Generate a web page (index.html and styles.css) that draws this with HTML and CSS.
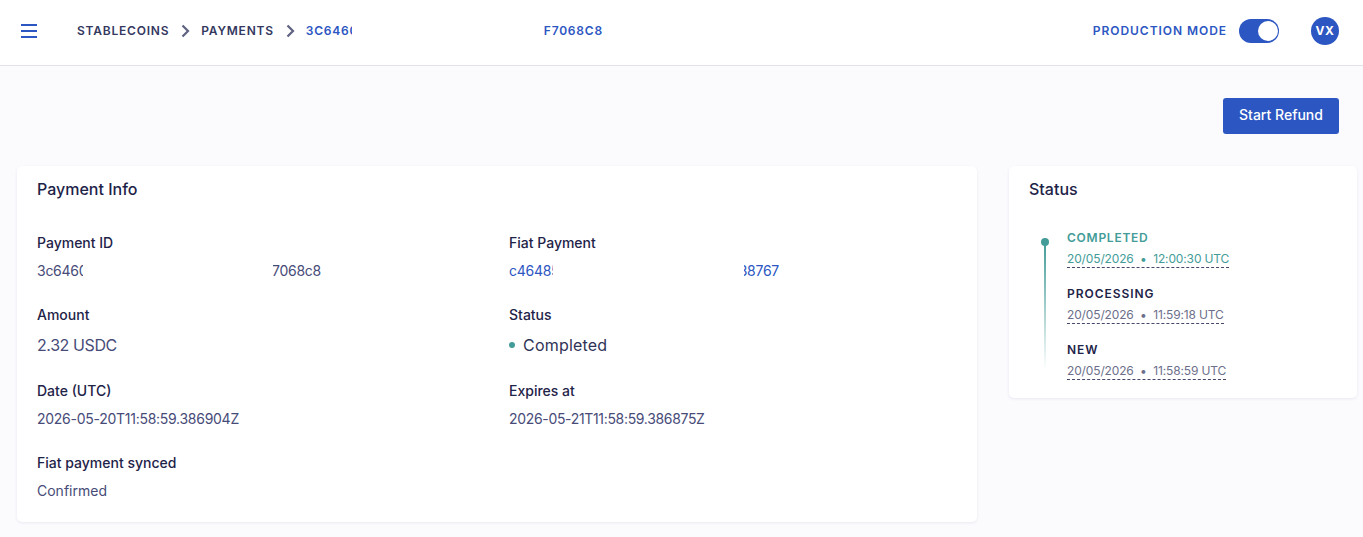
FILE: index.html
```html
<!DOCTYPE html>
<html lang="en">
<head>
<meta charset="utf-8">
<title>Payment</title>
<link rel="stylesheet" href="styles.css">
</head>
<body>
<header class="topbar">
  <svg class="menu" width="16" height="14" viewBox="0 0 16 14"><path d="M0 1h16M0 7h16M0 13h16" stroke="#2c56c2" stroke-width="2" fill="none"/></svg>
  <nav class="crumbs">
    <span class="crumb">STABLECOINS</span>
    <svg class="chev" width="9" height="14" viewBox="0 0 9 14"><path d="M1.5 1.5l5.5 5.5-5.5 5.5" stroke="#5f6280" stroke-width="2.2" fill="none"/></svg>
    <span class="crumb">PAYMENTS</span>
    <svg class="chev" width="9" height="14" viewBox="0 0 9 14"><path d="M1.5 1.5l5.5 5.5-5.5 5.5" stroke="#5f6280" stroke-width="2.2" fill="none"/></svg>
    <span class="crumb-id">
      <span class="clip clip-head-crumb">3C6460</span>
      <span class="crumb-tail">F7068C8</span>
    </span>
  </nav>
  <div class="mode">
    <span class="mode-label">PRODUCTION MODE</span>
    <span class="toggle"><span class="knob"></span></span>
    <span class="avatar">VX</span>
  </div>
</header>
<main class="content">
  <div class="actions"><button class="refund">Start Refund</button></div>
  <div class="cards">
    <section class="card info">
      <h2>Payment Info</h2>
      <div class="grid">
        <div class="field h72">
          <div class="label">Payment ID</div>
          <div class="value id num">
            <span class="clip clip-a">3c6460</span>
            <span class="clip-end clip-b"><span>f7068c8</span></span>
          </div>
        </div>
        <div class="field h72">
          <div class="label">Fiat Payment</div>
          <div class="value id num link">
            <span class="clip clip-c">c46485</span>
            <span class="clip-end clip-d"><span>38767</span></span>
          </div>
        </div>
        <div class="field h76">
          <div class="label">Amount</div>
          <div class="value big amount">2.32 USDC</div>
        </div>
        <div class="field h76">
          <div class="label">Status</div>
          <div class="value big status"><span class="dot"></span>Completed</div>
        </div>
        <div class="field h72">
          <div class="label">Date (UTC)</div>
          <div class="value num">2026-05-20T11:58:59.386904Z</div>
        </div>
        <div class="field h72">
          <div class="label">Expires at</div>
          <div class="value num expires">2026-05-21T11:58:59.386875Z</div>
        </div>
        <div class="field">
          <div class="label">Fiat payment synced</div>
          <div class="value">Confirmed</div>
        </div>
      </div>
    </section>
    <section class="card state">
      <h2>Status</h2>
      <div class="timeline">
        <div class="rail"></div>
        <div class="step done">
          <div class="step-name">COMPLETED</div>
          <div class="step-time">20/05/2026 &nbsp;•&nbsp; 12:00:30 UTC</div>
        </div>
        <div class="step">
          <div class="step-name">PROCESSING</div>
          <div class="step-time">20/05/2026 &nbsp;•&nbsp; 11:59:18 UTC</div>
        </div>
        <div class="step">
          <div class="step-name">NEW</div>
          <div class="step-time">20/05/2026 &nbsp;•&nbsp; 11:58:59 UTC</div>
        </div>
      </div>
    </section>
  </div>
</main>
</body>
</html>
```
FILE: styles.css
```css
* { box-sizing: border-box; }
html, body { margin: 0; height: 100%; }
body {
  background: #fbfbfe;
  font-family: Inter, "Liberation Sans", sans-serif;
  color: #1e2348;
  overflow: hidden;
}
.topbar {
  height: 66px;
  background: #fff;
  border-bottom: 1px solid #e1e2ea;
  display: flex;
  align-items: center;
  padding: 0 24px 4px 21px;
}
.menu { flex: none; margin-right: 40px; }
.crumbs { display: flex; align-items: center; flex: 1; }
.crumb, .crumb-id {
  font-size: 12px;
  font-weight: 600;
  letter-spacing: 0.78px;
  color: #34385f;
  line-height: 16px;
}
.chev { margin: 0 11px 0 12px; flex: none; }
.crumb-id { display: flex; color: #2c56c2; }
.clip { display: block; overflow: hidden; white-space: nowrap; }
.clip-head-crumb { width: 46px; }
.crumb-tail { margin-left: 192px; }
.mode { display: flex; align-items: center; }
.mode-label {
  font-size: 12px;
  font-weight: 600;
  letter-spacing: 0.95px;
  color: #2c56c2;
}
.toggle {
  width: 40px;
  height: 24px;
  border-radius: 12px;
  background: #2c56c2;
  margin-left: 12px;
  position: relative;
}
.knob {
  position: absolute;
  top: 2px;
  right: 1px;
  width: 20px;
  height: 20px;
  border-radius: 50%;
  background: #fff;
}
.avatar {
  width: 28px;
  height: 28px;
  border-radius: 50%;
  background: #2c56c2;
  color: #fff;
  margin-left: 32px;
  font-size: 12px;
  font-weight: 700;
  letter-spacing: 0.5px;
  display: flex;
  align-items: center;
  justify-content: center;
}
.content { padding: 32px 6px 0 17px; }
.actions { display: flex; justify-content: flex-end; padding-right: 18px; }
.refund {
  width: 116px;
  height: 36px;
  padding: 0 0 3px;
  background: #2c56c2;
  color: #fff;
  border: 0;
  border-radius: 3px;
  font: 500 14px Inter, "Liberation Sans", sans-serif;
}
.cards { display: flex; align-items: flex-start; gap: 32px; margin-top: 32px; }
.card {
  background: #fff;
  border-radius: 5px;
  box-shadow: 0 1px 3px rgba(40, 50, 110, 0.09);
}
.card h2 {
  margin: 0;
  font-size: 16px;
  font-weight: 500;
  line-height: 20px;
  color: #1e2348;
}
.info { width: 960px; height: 356px; padding: 13px 20px 0; }
.state { width: 348px; height: 232px; padding: 13px 20px 0; }
.grid {
  display: grid;
  grid-template-columns: 472px 1fr;
  margin-top: 34px;
}
.h72 { height: 72px; }
.h76 { height: 76px; }
.label { font-size: 14px; font-weight: 500; line-height: 20px; color: #1e2348; }
.value { margin-top: 8px; font-size: 14px; line-height: 20px; color: #474b78; }
.value.big { font-size: 16px; line-height: 24px; margin-top: 8px; }
.num { letter-spacing: -0.27px; }
.expires { letter-spacing: -0.33px; }
.amount { letter-spacing: -0.4px; }
.id { display: flex; }
.link { color: #2c56c2; }
.clip-a { width: 46px; }
.clip-b { margin-left: 190px; width: 48px; }
.clip-c { width: 44px; }
.clip-d { margin-left: 191px; width: 35px; }
.clip-end { display: flex; justify-content: flex-end; overflow: hidden; white-space: nowrap; }
.status { display: flex; align-items: center; color: #2f3356; letter-spacing: 0.2px; }
.dot {
  width: 6px;
  height: 6px;
  border-radius: 50%;
  background: #439c98;
  margin-right: 8px;
}
.timeline { position: relative; margin-top: 31px; padding-left: 38px; }
.rail {
  position: absolute;
  left: 15px;
  top: 12px;
  width: 2px;
  height: 128px;
  background: linear-gradient(#439c98, rgba(67, 156, 152, 0.7) 30%, rgba(67, 156, 152, 0));
}
.rail::before {
  content: "";
  position: absolute;
  left: -3px;
  top: -4px;
  width: 8px;
  height: 8px;
  border-radius: 50%;
  background: #439c98;
}
.step { height: 56px; }
.step-name {
  font-size: 12px;
  font-weight: 600;
  letter-spacing: 0.95px;
  line-height: 16px;
  color: #1e2348;
}
.step-time {
  display: inline-block;
  margin-top: 5px;
  font-size: 12px;
  line-height: 16px;
  letter-spacing: -0.14px;
  color: #6c6f8a;
  border-bottom: 1px dashed #45486a;
}
.done .step-name { letter-spacing: 0.75px; }
.done .step-name, .done .step-time { color: #439c98; }
```
